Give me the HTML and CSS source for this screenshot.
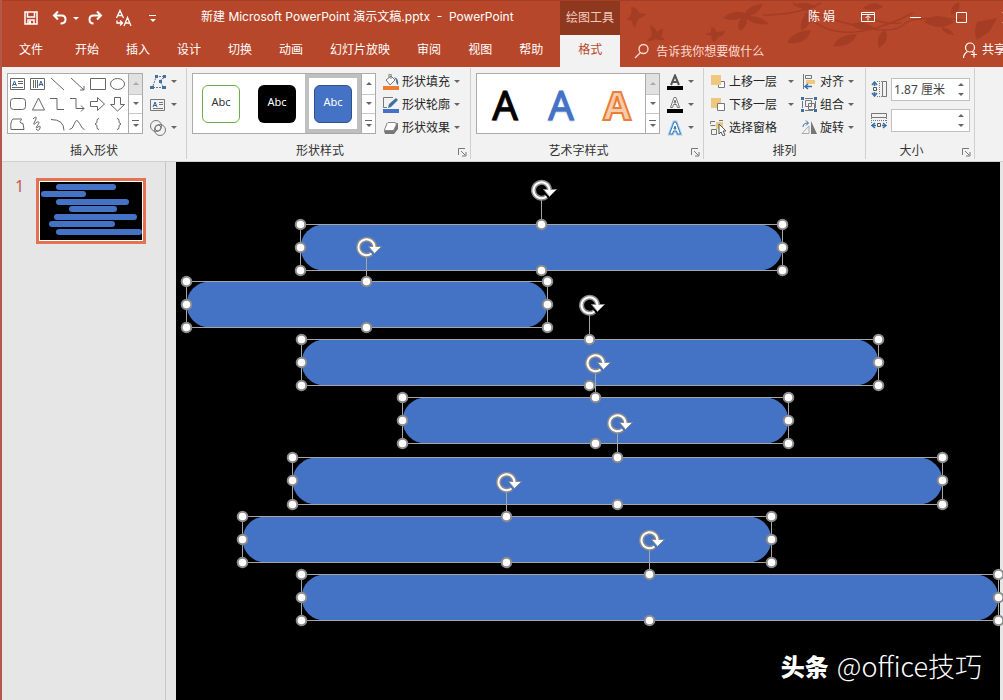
FILE: index.html
```html
<!DOCTYPE html>
<html lang="zh-CN">
<head>
<meta charset="utf-8">
<meta name="viewport" content="width=device-width, initial-scale=1">
<title>新建 Microsoft PowerPoint 演示文稿.pptx - PowerPoint</title>
<link rel="stylesheet" href="styles.css">
</head>
<body>
<div class="app">
  <header class="header">
    <svg class="leaves" width="390" height="67" viewBox="0 0 390 67" aria-hidden="true">
      <g fill="#9c3a22">
        <path d="M18 6q6 0 8 6l7 1q-3 4-8 5l-3 9q-3-3-3-7l-6-2q7-2 5-12z"/>
        <path d="M37 24q5 2 7 7l5-4q2 4-1 8l4 4q-6 1-9-1l-9 3q1-4 5-6z"/>
        <path d="M98 26q5 1 5 5l9-1q-1 5-7 6l-3 5q-5-2-3-6l-7-2 6-2z"/>
        <path d="M110 17q10-9 22-5 6-9 18-9-5 10-14 12 12 0 20 8-14 2-22-5 0 8-7 12-4-7 1-13-8 4-18 0z"/>
        <path d="M180 4q12-5 24 2-13 4-24-2z"/>
        <path d="M174 42q6-12 24-13-4 15-24 13z"/><path d="M188 30q-2-12 8-20 6 12-8 20z"/>
        <path d="M220 45q6-12 24-12-6 14-24 12z"/><path d="M266 47q-4-12 6-18 6 10-6 18z"/>
        <path d="M262 28q-10-10-24-5 10 9 24 5z"/><path d="M311 21q12-12 30 0-14 10-30 0z"/>
        <path d="M338 14q-1-10 8-13 3 9-8 13z"/><path d="M364 21l20-4-8 14-12 8q-4-8 0-18z"/>
        <path d="M250 7q11-9 20-1-10 6-20 1z"/><path d="M328 26q10 1 13 8-11-1-13-8z"/>
      </g>
      <g fill="none" stroke="#9c3a22" stroke-width="1.5"><path d="M150 14q35 0 58-12M180 2q20 12 60 22t50 0 60-5M192 12q20 24 58 18 25-5 50-18M248 10q15 14 40 12"/></g>
    </svg>
    <div class="titlebar">
      <div class="quick">
        <button class="tool save" aria-label="保存"><svg width="14" height="14" viewBox="0 0 14 14"><path d="M1 1h12v12H1zM3.500 1v5h7V1M4 13V9h6v4" fill="none" stroke="#fff" stroke-width="1.500"/><path d="M5 10h2v3H5z" fill="#fff"/></svg></button>
        <button class="tool undo" aria-label="撤消"><svg width="16" height="16" viewBox="0 0 16 16" fill="none" stroke="#fff" stroke-width="2"><path d="M6 1.500L2 5.500l4 4M2 5.500h7.500q4 0 4 4t-5 4"/></svg><i class="caret light"></i></button>
        <button class="tool redo" aria-label="恢复"><svg width="16" height="16" viewBox="0 0 16 16" fill="none" stroke="#fff" stroke-width="2"><path d="M10 1.500l4 4-4 4M14 5.500H6.500q-4 0-4 4t4 4"/></svg></button>
        <button class="tool font" aria-label="替换字体"><svg width="18" height="18" viewBox="0 0 18 18" fill="none" stroke="#fff" stroke-width="1.300"><path d="M1.500 9L5 1.500 8.500 9M3 6.500h4M9 17l3.500-8.500L16 17M10.500 14h4M2 11.500v2.500h5M5 11.500L7.500 14 5 16.500"/></svg></button>
        <button class="tool more" aria-label="自定义快速访问工具栏"><i class="bar light"></i><i class="caret light"></i></button>
      </div>
      <div class="doc-title">新建 Microsoft PowerPoint 演示文稿.pptx&nbsp; -&nbsp; PowerPoint</div>
      <div class="context">绘图工具</div>
      <div class="window-tools">
        <span class="user">陈 娟</span>
        <button class="tool" aria-label="功能区显示选项"><svg width="14" height="12" viewBox="0 0 14 12" fill="none" stroke="#fff"><path d="M.5 1.500h13v9H.5zM.5 3.500h13M7 9.500V5M4.500 7L7 4.500 9.500 7"/></svg></button>
        <button class="tool" aria-label="最小化"><svg width="11" height="11" viewBox="0 0 11 11"><path d="M0 5.500h11" stroke="#fff"/></svg></button>
        <button class="tool" aria-label="最大化"><svg width="11" height="11" viewBox="0 0 11 11"><path d="M.5.5h10v10H.5z" fill="none" stroke="#fff"/></svg></button>
        <button class="tool" aria-label="关闭"><svg width="11" height="11" viewBox="0 0 11 11"><path d="M.5.5l10 10M10.500.5l-10 10" stroke="#fff"/></svg></button>
      </div>
    </div>
    <nav class="tabs">
      <button class="tab file">文件</button><button class="tab">开始</button><button class="tab">插入</button><button class="tab">设计</button><button class="tab">切换</button><button class="tab">动画</button><button class="tab">幻灯片放映</button><button class="tab">审阅</button><button class="tab">视图</button><button class="tab">帮助</button><button class="tab active">格式</button>
      <label class="tell"><svg width="16" height="16" viewBox="0 0 16 16" fill="none" stroke="#fbdcd3" stroke-width="1.300"><circle cx="9.500" cy="6" r="4.500"/><path d="M6.500 9.500L1 15"/></svg><input type="text" aria-label="告诉我你想要做什么" placeholder="告诉我你想要做什么"></label>
      <button class="share"><svg width="16" height="17" viewBox="0 0 16 17" fill="none" stroke="#fff" stroke-width="1.200"><circle cx="8" cy="5.500" r="4.500"/><path d="M1.500 16q0-4 4-6.500M10 9.500l1 1M12 9.500v6M9 12.500h6"/></svg>共享</button>
    </nav>
  </header>

  <section class="ribbon">
    <div class="group insert">
      <div class="group-body">
        <div class="gallery">
          <div class="shape-grid">
            <svg viewBox="0 0 20 20"><path d="M2.500 4.500h14v11h-14z"/><path class="blue" d="M4.500 12l2-5 2 5M5 10.500h3"/><path d="M10 7.500h5M10 9.500h5M4 13.500h11"/></svg>
            <svg viewBox="0 0 20 20"><path d="M2.500 4.500h14v11h-14zM5.500 6v8M7.500 6v8M9.500 6v8"/><path class="blue" d="M11 12l2-5 2 5M12 10.500h3"/></svg>
            <svg viewBox="0 0 20 20"><path d="M3 4l13 12"/></svg>
            <svg viewBox="0 0 20 20"><path d="M3 4l13 12M16 12v4h-4"/></svg>
            <svg viewBox="0 0 20 20"><path d="M2.500 4.500h15v11h-15z"/></svg>
            <svg viewBox="0 0 20 20"><ellipse cx="9.500" cy="10" rx="7" ry="5.500"/></svg>
            <svg viewBox="0 0 20 20"><rect x="2.500" y="4.500" width="15" height="11" rx="3"/></svg>
            <svg viewBox="0 0 20 20"><path d="M10.500 4l6 12h-12z"/></svg>
            <svg viewBox="0 0 20 20"><path d="M2 4.500h7v11h7"/></svg>
            <svg viewBox="0 0 20 20"><path d="M2 4.500h6v10h8M13 11.500l3 3-3 3"/></svg>
            <svg viewBox="0 0 20 20"><path d="M2.500 7.500h7v-4l7 6.500-7 6.500v-4h-7z"/></svg>
            <svg viewBox="0 0 20 20"><path d="M6.500 3.500h6v7h4L9.500 17l-7-6.500h4z"/></svg>
            <svg viewBox="0 0 20 20"><path d="M5 5h7q3-1 0 2.500 0 2 3 2l1 6H3q-1-8 2-10.500z"/></svg>
            <svg viewBox="0 0 20 20"><path d="M5 5q4-4 3 0L6 9q-1 3 3-1 4-1 0 4-2 3 1 1 3-2 2 1-1 4-4 1"/></svg>
            <svg viewBox="0 0 20 20"><path d="M3 5.500q13 0 13 11"/></svg>
            <svg viewBox="0 0 20 20"><path d="M1.500 15.500q3 0 5-6t5 0 5 6"/></svg>
            <svg viewBox="0 0 20 20"><path d="M11 4.500q-2 0-2 2v2l-2 1.500 2 1.500v2q0 2 2 2"/></svg>
            <svg viewBox="0 0 20 20"><path d="M9 4.500q2 0 2 2v2l2 1.500-2 1.500v2q0 2-2 2"/></svg>
          </div>
          <div class="scroll"><button class="off" aria-label="上一行"><i class="caret up"></i></button><button aria-label="下一行"><i class="caret"></i></button><button aria-label="更多形状"><i class="bar"></i><i class="caret"></i></button></div>
        </div>
        <div class="commands">
          <button class="cmd" aria-label="编辑形状"><svg width="17" height="16" viewBox="0 0 17 16"><path d="M6 2.500h8M3 12L6 3M3 13.500h10M14 4q-7 2 0 9" fill="none" stroke="#5b7ba5" stroke-dasharray="2 1"/><path d="M0 12h4v3H0zM5 1h3v3H5zM13 1h3v3h-3zM9 6h3v3H9zM12 12h4v3h-4z" fill="#41719c"/></svg><i class="caret"></i></button>
          <button class="cmd" aria-label="文本框"><svg width="17" height="16" viewBox="0 0 17 16" fill="none" stroke="#777"><path d="M.5 2.500h14v11H.5zM9 5.500h4M9 7.500h4M3 11.500h10"/><path d="M3 10l2-5 2 5M4 8.500h2" stroke="#2b63a5"/></svg><i class="caret"></i></button>
          <button class="cmd" aria-label="合并形状"><svg width="17" height="16" viewBox="0 0 17 16" fill="none" stroke="#777"><circle cx="6" cy="6" r="5.500"/><circle cx="10" cy="10" r="5.500"/><circle cx="8" cy="8" r="3"/></svg><i class="caret"></i></button>
        </div>
      </div>
      <div class="group-label">插入形状</div>
    </div>

    <div class="group styles">
      <div class="group-body">
        <div class="gallery">
          <button class="style-cell"><span class="swatch outline">Abc</span></button>
          <button class="style-cell"><span class="swatch black">Abc</span></button>
          <button class="style-cell selected"><span class="swatch fill">Abc</span></button>
          <div class="scroll"><button aria-label="上一行"><i class="caret up"></i></button><button aria-label="下一行"><i class="caret"></i></button><button aria-label="更多样式"><i class="bar"></i><i class="caret"></i></button></div>
        </div>
        <div class="commands">
          <button class="cmd"><svg width="17" height="16" viewBox="0 0 17 16"><path d="M0 12h16v4H0z" fill="#ed7d31"/><path d="M3 6l5-4 4 4-5 5zM6 4V0h2v5" fill="#fff" stroke="#777"/><path d="M11 3q5 1 4 8-2-1-2-5z" fill="#41719c"/></svg>形状填充<i class="caret"></i></button>
          <button class="cmd"><svg width="17" height="16" viewBox="0 0 17 16"><path d="M0 12h16v4H0z" fill="#4472c4"/><path d="M10 .5H.5v10H4" fill="none" stroke="#777"/><path d="M5 11l1-4 7-6 2 2-7 7z" fill="#41719c"/></svg>形状轮廓<i class="caret"></i></button>
          <button class="cmd"><svg width="17" height="16" viewBox="0 0 17 16"><path d="M4 3h11v6l-4 5H2l-1-3z" fill="#777"/><path d="M5 2.500h7q2 0 1 3l-2 4q0 1-2 1H2q-1 0 0-2l2-5z" fill="#fff" stroke="#888"/></svg>形状效果<i class="caret"></i></button>
        </div>
      </div>
      <div class="group-label">形状样式</div>
      <button class="launcher" aria-label="设置形状格式"><svg width="9" height="9" viewBox="0 0 9 9"><path d="M.5 7V.5H7M3 3l4 4M8 4v4H4" fill="none" stroke="#777"/></svg></button>
    </div>

    <div class="group wordart">
      <div class="group-body">
        <div class="gallery">
          <button class="style-cell art-black">A</button>
          <button class="style-cell art-blue">A</button>
          <button class="style-cell art-orange">A</button>
          <div class="scroll"><button class="off" aria-label="上一行"><i class="caret up"></i></button><button aria-label="下一行"><i class="caret"></i></button><button aria-label="更多艺术字"><i class="bar"></i><i class="caret"></i></button></div>
        </div>
        <div class="commands">
          <button class="cmd" aria-label="文本填充"><svg width="17" height="16" viewBox="0 0 17 16"><path d="M0 12h16v4H0z"/><path d="M4 11L8 1.500 12 11M5.500 8h5" fill="none" stroke="#555" stroke-width="2"/></svg><i class="caret"></i></button>
          <button class="cmd" aria-label="文本轮廓"><svg width="17" height="16" viewBox="0 0 17 16"><path d="M0 12h16v4H0z"/><path d="M3.500 10.500L7 .5h2l3.500 10h-2l-1-3h-3l-1 3zM7 6h2L8 3z" fill="#fff" stroke="#777"/></svg><i class="caret"></i></button>
          <button class="cmd" aria-label="文本效果"><svg width="17" height="16" viewBox="0 0 17 16"><path d="M2.500 14L7 2h2l4.500 12h-3l-1-3h-3l-1 3zM7 9h2L8 6z" fill="#fff" stroke="#a4cdf0" stroke-width="3"/><path d="M2.500 14L7 2h2l4.500 12h-3l-1-3h-3l-1 3zM7 9h2L8 6z" fill="#fff" stroke="#2f75b5"/></svg><i class="caret"></i></button>
        </div>
      </div>
      <div class="group-label">艺术字样式</div>
      <button class="launcher" aria-label="设置文本效果格式"><svg width="9" height="9" viewBox="0 0 9 9"><path d="M.5 7V.5H7M3 3l4 4M8 4v4H4" fill="none" stroke="#777"/></svg></button>
    </div>

    <div class="group arrange">
      <div class="group-body">
        <div class="commands wide">
          <button class="cmd"><svg width="17" height="16" viewBox="0 0 17 16"><path d="M8.500 7.500h6v6h-6z" fill="#fff" stroke="#777"/><path d="M1 1h10v10H1z" fill="#edc87e"/></svg>上移一层<i class="caret"></i></button>
          <button class="cmd"><svg width="17" height="16" viewBox="0 0 17 16"><path d="M1 1h10v10H1z" fill="#edc87e"/><path d="M7.500 6.500h7v7h-7z" fill="#fff" stroke="#777"/></svg>下移一层<i class="caret"></i></button>
          <button class="cmd"><svg width="17" height="16" viewBox="0 0 17 16"><path d="M6 2h7v7H6z" fill="#edc87e"/><path d="M.5 4V1.500H5M.5 5.500h5M1.500 9.500h5v5h-5zM9 .5h4" fill="none" stroke="#777"/><path d="M9 4v10l2-2 2 4 2-1-2-4h3z" fill="#fff" stroke="#555"/></svg>选择窗格</button>
        </div>
        <div class="commands">
          <button class="cmd"><svg width="17" height="16" viewBox="0 0 17 16"><path d="M2.500 0v15M4.500 1.500h6v3h-6z" fill="none" stroke="#777"/><path d="M5 6h9v4H5z" fill="#edc87e"/><path d="M11 12.500H5M7 10l-3 2.500L7 15" fill="none" stroke="#2f6db5" stroke-width="1.500"/></svg>对齐<i class="caret"></i></button>
          <button class="cmd"><svg width="17" height="16" viewBox="0 0 17 16"><path d="M4.500 3.500h6v6h-6zM7.500 6.500h6v6h-6zM1.500 4v7M4 1.500h8M4 13.500h8M14.500 4v7" fill="none" stroke="#777"/><path d="M0 0h3v3H0zM13 0h3v3h-3zM0 12h3v3H0zM13 12h3v3h-3z" fill="#3b6fa5"/></svg>组合<i class="caret"></i></button>
          <button class="cmd"><svg width="17" height="16" viewBox="0 0 17 16"><path d="M10 1v13h6z" fill="#777"/><path d="M8 6v7.500H1z" fill="none" stroke="#aaa"/><path d="M2 7q0-4 5-4M5 .5L7.500 3 5 5.500" fill="none" stroke="#3b6fa5"/></svg>旋转<i class="caret"></i></button>
        </div>
      </div>
      <div class="group-label">排列</div>
    </div>

    <div class="group size">
      <div class="group-body">
        <div class="fields">
          <div class="field"><label for="height" aria-label="形状高度"><svg width="17" height="17" viewBox="0 0 17 17"><path d="M11.500.5h4v15h-4z" fill="none" stroke="#777"/><path d="M6 .5h5M6 15.500h5M8.500 2v12" fill="none" stroke="#777" stroke-dasharray="1 1"/><path d="M3.500 1v4M1 4l2.500-3L6 4M3.500 11v4M1 12l2.500 3L6 12" fill="none" stroke="#3b6fa5" stroke-width="1.500"/><path d="M2.500 6.500h3v3h-3z" fill="none" stroke="#555"/></svg></label><span class="spin"><input id="height" type="text" value="1.87 厘米"><span class="steps"><button aria-label="增加高度"><i class="caret up"></i></button><button aria-label="减小高度"><i class="caret"></i></button></span></span></div>
          <div class="field"><label for="width" aria-label="形状宽度"><svg width="17" height="17" viewBox="0 0 17 17"><path d="M.5 1.500h15v4H.5z" fill="none" stroke="#777"/><path d="M.5 6v5M15.500 6v5M2 8.500h13" fill="none" stroke="#777" stroke-dasharray="1 1"/><path d="M1 13.500h4M4 11l-3 2.500L4 16M11 13.500h4M12 11l3 2.500-3 2.500" fill="none" stroke="#3b6fa5" stroke-width="1.500"/><path d="M6.500 11.500h3v3h-3z" fill="none" stroke="#555"/></svg></label><span class="spin"><input id="width" type="text" value=""><span class="steps"><button aria-label="增加宽度"><i class="caret up"></i></button><button aria-label="减小宽度"><i class="caret"></i></button></span></span></div>
        </div>
      </div>
      <div class="group-label">大小</div>
      <button class="launcher" aria-label="大小和位置"><svg width="9" height="9" viewBox="0 0 9 9"><path d="M.5 7V.5H7M3 3l4 4M8 4v4H4" fill="none" stroke="#777"/></svg></button>
    </div>
  </section>

  <main class="workspace">
    <aside class="slides">
      <span class="slide-number">1</span>
      <svg class="thumb" viewBox="0 0 104 60" aria-label="幻灯片 1"></svg>
    </aside>
    <div class="stage">
      <svg class="slide" role="img" aria-label="所选形状"></svg>
      <div class="watermark"><b>头条</b><span>@office技巧</span></div>
    </div>
  </main>
</div>
<script src="script.js"></script>
</body>
</html>
```
FILE: styles.css
```css
* { box-sizing: border-box; }
body {
  margin: 0;
  font: 12px/16px "Noto Sans", "Noto Sans CJK SC", sans-serif;
  color: #333;
  background: #e6e6e6;
}
button, input { font: inherit; color: inherit; border: 0; padding: 0; margin: 0; background: none; }
svg { display: block; flex: none; }
.app {
  display: flex;
  flex-direction: column;
  min-height: 100vh;
  border-left: 2px solid #b5574a;
  overflow: hidden;
}

.header { position: relative; background: #b7472a; color: #fff; border-top: 1px solid #a53e24; }
.leaves { position: absolute; right: 0; top: 0; opacity: 0.7; }
.titlebar { position: relative; display: grid; grid-template-columns: 199px 359px 60px 1fr; height: 34px; align-items: center; }
.quick { display: flex; align-items: center; padding-left: 22px; }
.tool { display: flex; align-items: center; }
.undo { margin-left: 14px; gap: 5px; }
.redo { margin-left: 8px; }
.font { margin-left: 12px; }
.more { flex-direction: column; gap: 3px; margin-left: 16px; }
.doc-title { font-family: Inter, "Noto Sans CJK SC", sans-serif; white-space: nowrap; padding-bottom: 2px; }
.context { align-self: stretch; display: flex; align-items: center; justify-content: center; background: #8f3820; color: #f3cbbd; }
.window-tools { display: flex; align-items: center; justify-content: flex-end; gap: 35px; margin-right: -10px; padding-bottom: 2px; }
.user { margin-right: -9px; white-space: nowrap; }

.tabs { position: relative; display: flex; gap: 1px; height: 32px; padding-left: 4px; }
.tab { padding: 0 13px 2px; white-space: nowrap; }
.file { margin-right: 5px; }
.tab.active { margin-left: 3px; padding: 0 18px 2px; background: #f2f2f2; color: #b7472a; }
.tell { display: flex; align-items: center; gap: 6px; margin-left: 13px; color: #fbdcd3; }
.tell input { width: 140px; height: 20px; outline: 0; }
.tell input::placeholder { color: #fbdcd3; opacity: 1; }
.share { display: flex; align-items: center; gap: 4px; margin-left: auto; margin-right: -3px; padding-bottom: 2px; white-space: nowrap; }

.caret { display: block; border: 3px solid transparent; border-top-color: #666; border-bottom: 0; }
.caret.up { border-top: 0; border-bottom: 3px solid #666; }
.caret.light { border-top-color: #fff; }
.bar { display: block; width: 7px; height: 1px; background: #666; }
.bar.light { background: #fff; }

.ribbon { display: flex; background: #f2f2f2; border-bottom: 1px solid #d0d0d0; }
.group { position: relative; display: flex; flex-direction: column; padding: 5px 5px 0; margin: 1px 0 2px; border-right: 1px solid #cfcfcf; }
.insert { width: 185px; }
.styles { width: 284px; }
.wordart { width: 233px; }
.arrange { width: 162px; }
.size { width: 109px; }
.group-body { display: flex; height: 70px; }
.group-label { text-align: center; }
.styles .group-label, .wordart .group-label, .size .group-label { padding-right: 17px; }
.launcher { position: absolute; right: 3px; bottom: 2px; }
.gallery { display: flex; height: 61px; background: #fff; border: 1px solid #ababab; }
.shape-grid { display: grid; grid-template-columns: repeat(6, 20px); grid-template-rows: repeat(3, 20px); }
.shape-grid svg { fill: none; stroke: #666; }
.shape-grid .blue { stroke: #2b63a5; }
.scroll { display: grid; grid-template-rows: repeat(3, 1fr); width: 14px; border-left: 1px solid #ababab; }
.scroll button { display: flex; flex-direction: column; align-items: center; justify-content: center; gap: 3px; }
.scroll button + button { border-top: 1px solid #c6c6c6; }
.scroll .off { background: #e1e1e1; }
.scroll .off .caret { border-bottom-color: #aaa; }

.commands { display: flex; flex-direction: column; margin: -3px 0 0 7px; }
.cmd { display: flex; align-items: center; height: 23px; gap: 2px; white-space: nowrap; color: #262626; }
.cmd .caret { margin-left: 2px; }
.commands.wide { width: 84px; margin-left: 1px; }
.wide .cmd .caret { margin-left: auto; }
.wide + .commands { margin-left: 7px; }

.style-cell { display: flex; align-items: center; justify-content: center; width: 56px; border: 4px solid transparent; }
.style-cell.selected { border-color: #bfbfbf; }
.swatch { display: flex; align-items: center; justify-content: center; width: 38px; height: 38px; padding-bottom: 4px; border-radius: 6px; font-size: 11px; color: #fff; }
.swatch.outline { border: 1px solid #70ad47; color: #333; }
.swatch.black { background: #000; }
.swatch.fill { background: #4472c4; border: 1px solid #2f528f; }
.wordart .style-cell { font: 40px/48px "Noto Sans", sans-serif; padding-top: 2px; }
.art-black { color: #000; -webkit-text-stroke: 1px #000; text-shadow: 1px 1px 1px #aaa; }
.art-blue { color: #4472c4; -webkit-text-stroke: 1px #4472c4; text-shadow: 0 1px 2px #8faadc; }
.wordart .art-orange { color: #f8cbad; font-weight: 700; -webkit-text-stroke: 2px #ed7d31; }

.fields { display: flex; flex-direction: column; gap: 8px; padding-top: 5px; }
.field { display: flex; align-items: center; gap: 3px; }
.spin { display: flex; width: 79px; height: 23px; background: #fff; border: 1px solid #c0c0c0; }
.spin input { flex: 1; min-width: 0; padding-left: 2px; color: #444; outline: 0; }
.steps { display: flex; flex-direction: column; width: 16px; }
.steps button { flex: 1; display: flex; align-items: center; justify-content: center; }

.workspace { flex: 1; display: flex; }
.slides { display: flex; align-items: flex-start; gap: 13px; width: 164px; padding: 16px 0 0 13px; border-right: 1px solid #c6c6c6; }
.slide-number { font-size: 16px; width: 8px; color: #c0604a; }
.thumb { width: 110px; height: 66px; background: #000; border: 3px solid #e4714f; outline: 1px solid #fff; outline-offset: -4px; }
.stage { position: relative; flex: 1; display: flex; margin: 0 3px 0 10px; background: #000; }
.slide { flex: 1; width: 100%; min-height: 480px; overflow: visible; }
.body-shape { fill: #4472c4; }
.frame { fill: none; stroke: #a6a6a6; }
.handle { fill: #fff; stroke: #8c8c8c; stroke-width: 2; }
.rotate-edge { fill: none; stroke: #8c8c8c; stroke-width: 5; }
.rotate-line { fill: none; stroke: #fff; stroke-width: 2; }
.rotate-tip { fill: #fff; stroke: #8c8c8c; }
.watermark { position: absolute; right: 18px; bottom: 16px; display: flex; align-items: center; gap: 8px; font: 300 27px/36px "Noto Sans CJK SC", sans-serif; color: #fff; white-space: nowrap; }
.watermark b { font-size: 24px; font-weight: 900; }
```
FILE: script.js
```js
// Shape boxes on the slide: left, top, right, bottom
const shapes = [
  [125, 63, 607, 109],
  [11, 120, 372, 166],
  [126, 178, 703, 224],
  [227, 236, 613, 282],
  [117, 296, 767, 343],
  [67, 355, 596, 401],
  [126, 413, 823, 459]
];

const bodies = shapes.map(([l, t, r, b]) =>
  `<rect class="body-shape" x="${l}" y="${t}" width="${r - l}" height="${b - t}" rx="${(b - t) / 2}"/>`
).join("");

const controls = shapes.map(([l, t, r, b]) => {
  const cx = Math.floor((l + r) / 2);
  const cy = Math.floor((t + b) / 2);
  const points = [[l, t], [cx, t], [r, t], [l, cy], [r, cy], [l, b], [cx, b], [r, b]];
  const handles = points.map(([x, y]) => `<circle class="handle" cx="${x}" cy="${y}" r="4.8"/>`).join("");
  return `<rect class="frame" x="${l}" y="${t}" width="${r - l}" height="${b - t}"/>
    <path class="frame" d="M${cx} ${t}v-25"/>${handles}
    <g transform="translate(${cx} ${t - 34})">
      <path class="rotate-edge" d="M5 6A8 8 0 1 1 8 -1"/>
      <path class="rotate-tip" d="M2 -1H15L8 6Z"/>
      <path class="rotate-line" d="M5 6A8 8 0 1 1 8 0"/>
    </g>`;
}).join("");

// Half-pixel shift keeps the one-pixel frames crisp
document.querySelector(".slide").innerHTML = `<g transform="translate(-.5 -.5)">${bodies}${controls}</g>`;

document.querySelector(".thumb").innerHTML =
  [[17, 3, 60], [2, 10, 45], [17, 18, 73], [30, 25, 48], [15, 33, 83], [10, 40, 66], [17, 48, 86]]
    .map(([x, y, w]) => `<rect class="body-shape" x="${x}" y="${y}" width="${w}" height="6" rx="3"/>`)
    .join("");
```
